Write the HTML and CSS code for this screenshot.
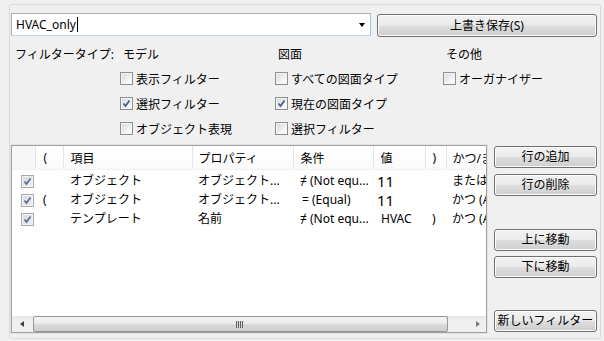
FILE: index.html
```html
<!DOCTYPE html>
<html lang="ja">
<head>
    <meta charset="UTF-8">
    <title>フィルター</title>
    <link rel="stylesheet" href="styles.css">
</head>
<body>
    <div class="group">
        <div class="top-row">
            <div class="combo">
                <span class="combo-text">HVAC_only</span><span class="caret"></span>
                <span class="combo-arrow"></span>
            </div>
            <button class="btn btn-save">上書き保存(S)</button>
        </div>

        <div class="filter-types">
            <div class="ft-label">フィルタータイプ:</div>
            <div class="ft-col ft-model">
                <div class="ft-head">モデル</div>
                <div class="chk"><span class="box"></span>表示フィルター</div>
                <div class="chk"><span class="box checked"><svg viewBox="0 0 11 11"><path d="M2.5 5.5 L4.5 8 L8.5 2.5" /></svg></span>選択フィルター</div>
                <div class="chk"><span class="box"></span>オブジェクト表現</div>
            </div>
            <div class="ft-col ft-sheet">
                <div class="ft-head">図面</div>
                <div class="chk"><span class="box"></span>すべての図面タイプ</div>
                <div class="chk"><span class="box checked"><svg viewBox="0 0 11 11"><path d="M2.5 5.5 L4.5 8 L8.5 2.5" /></svg></span>現在の図面タイプ</div>
                <div class="chk"><span class="box"></span>選択フィルター</div>
            </div>
            <div class="ft-col ft-other">
                <div class="ft-head">その他</div>
                <div class="chk"><span class="box"></span>オーガナイザー</div>
            </div>
        </div>

        <div class="rules">
            <div class="grid-box">
                <div class="grid-scroll">
                    <table class="grid">
                        <colgroup>
                            <col class="c-on"><col class="c-open"><col class="c-item"><col class="c-prop">
                            <col class="c-cond"><col class="c-val"><col class="c-close"><col class="c-join">
                        </colgroup>
                        <thead>
                            <tr>
                                <th></th>
                                <th class="p-open">(</th>
                                <th>項目</th>
                                <th class="p-prop">プロパティ</th>
                                <th>条件</th>
                                <th>値</th>
                                <th>)</th>
                                <th class="p-join">かつ/または</th>
                            </tr>
                        </thead>
                        <tbody>
                            <tr>
                                <td><span class="box dim checked"><svg viewBox="0 0 11 11"><path d="M2.5 5.5 L4.5 8 L8.5 2.5" /></svg></span></td>
                                <td class="p-open"></td>
                                <td>オブジェクト</td>
                                <td class="p-prop">オブジェクト...</td>
                                <td>≠ (Not equ...</td>
                                <td class="num">11</td>
                                <td></td>
                                <td class="p-join">または (OR)</td>
                            </tr>
                            <tr>
                                <td><span class="box dim checked"><svg viewBox="0 0 11 11"><path d="M2.5 5.5 L4.5 8 L8.5 2.5" /></svg></span></td>
                                <td class="p-open">(</td>
                                <td>オブジェクト</td>
                                <td class="p-prop">オブジェクト...</td>
                                <td class="p-eq">= (Equal)</td>
                                <td class="num">11</td>
                                <td></td>
                                <td class="p-join">かつ (AND)</td>
                            </tr>
                            <tr>
                                <td><span class="box dim checked"><svg viewBox="0 0 11 11"><path d="M2.5 5.5 L4.5 8 L8.5 2.5" /></svg></span></td>
                                <td class="p-open"></td>
                                <td>テンプレート</td>
                                <td class="p-prop">名前</td>
                                <td>≠ (Not equ...</td>
                                <td class="p-text">HVAC</td>
                                <td>)</td>
                                <td class="p-join">かつ (AND)</td>
                            </tr>
                        </tbody>
                    </table>
                </div>
                <div class="hscroll">
                    <span class="sb-arrow sb-left"></span>
                    <span class="sb-thumb"><span class="grip"></span></span>
                    <span class="sb-track"></span>
                    <span class="sb-arrow sb-right"></span>
                </div>
            </div>

            <div class="side-buttons">
                <button class="btn btn-add">行の追加</button>
                <button class="btn btn-del">行の削除</button>
                <button class="btn btn-up">上に移動</button>
                <button class="btn btn-down">下に移動</button>
                <button class="btn btn-new">新しいフィルター</button>
            </div>
        </div>
    </div>
</body>
</html>
```

FILE: styles.css
```css
body {
    margin: 0;
    background: #f0f0f0;
    font-family: "Noto Sans", "Noto Sans CJK JP", sans-serif;
    font-size: 12px;
    color: #000;
}
.group {
    box-sizing: border-box;
    width: 592px;
    height: 335px;
    margin: 4px 0 0 9px;
    padding: 8px 2px 0 1px;
    border: 1px solid #d9d9d9;
    border-radius: 3px;
}
.top-row {
    display: flex;
    gap: 6px;
}
.combo {
    box-sizing: border-box;
    position: relative;
    display: flex;
    align-items: center;
    width: 360px;
    height: 23px;
    padding-left: 4px;
    background: #fff;
    border: 1px solid #abadb3;
    border-right-color: #a3c6e8;
    border-bottom-color: #b9d3ec;
}
.combo-text {
    line-height: 16px;
}
.caret {
    display: inline-block;
    width: 1px;
    height: 15px;
    margin-left: 1px;
    background: #000;
}
.combo-arrow {
    position: absolute;
    right: 5px;
    top: 9px;
    width: 0;
    height: 0;
    border-left: 3.5px solid transparent;
    border-right: 3.5px solid transparent;
    border-top: 4px solid #000;
}
.btn {
    box-sizing: border-box;
    height: 22px;
    padding: 0;
    font-family: "Noto Sans", "Noto Sans CJK JP", sans-serif;
    font-size: 12px;
    line-height: 18px;
    color: #000;
    border: 1px solid #707070;
    border-radius: 3px;
    background: linear-gradient(#f2f2f2 0%, #ebebeb 48%, #dddddd 52%, #cfcfcf 100%);
    box-shadow: inset 0 0 0 1px #fcfcfc;
}
.btn-save {
    width: 220px;
    height: 23px;
    margin-top: 1px;
}
.filter-types {
    display: flex;
    margin-top: 10px;
    padding-left: 4px;
}
.ft-label {
    width: 105px;
    line-height: 16px;
}
.ft-model {
    width: 155px;
}
.ft-sheet {
    width: 168px;
}
.ft-head {
    line-height: 16px;
    padding-left: 3px;
    margin-bottom: 3px;
}
.chk {
    display: flex;
    align-items: center;
    gap: 3px;
    height: 25px;
    white-space: nowrap;
}
.box {
    box-sizing: border-box;
    display: inline-block;
    width: 13px;
    height: 13px;
    border: 1px solid #8e8f8f;
    background: linear-gradient(135deg, #d6d6d6, #f6f6f6 70%, #fff);
    box-shadow: inset 0 0 0 1px #f4f4f4;
}
.box svg {
    display: block;
    width: 11px;
    height: 11px;
}
.box path {
    fill: none;
    stroke: #4a5e9a;
    stroke-width: 1.8;
}
.box.dim {
    border-color: #a9a9a9;
    background: linear-gradient(135deg, #d9d9d9, #f0f0f0);
}
.box.dim path {
    stroke: #5b6f9f;
}
.rules {
    display: flex;
    gap: 7px;
    height: 188px;
    margin-top: 4px;
}
.grid-box {
    box-sizing: border-box;
    display: flex;
    flex-direction: column;
    width: 476px;
    height: 188px;
    background: #fff;
    border: 1px solid #a0a0a0;
    box-shadow: 0 0 0 1px #e3e3e3;
}
.grid-scroll {
    flex: 1;
    overflow: hidden;
}
.grid {
    table-layout: fixed;
    width: 514px;
    border-collapse: collapse;
}
.c-on { width: 23px; }
.c-open { width: 28px; }
.c-item { width: 129px; }
.c-prop { width: 101px; }
.c-cond { width: 80px; }
.c-val { width: 52px; }
.c-close { width: 21px; }
.c-join { width: 80px; }
.grid th {
    height: 23px;
    padding: 0 0 0 7px;
    font-weight: normal;
    text-align: left;
    white-space: nowrap;
    overflow: hidden;
    background: linear-gradient(#ffffff, #fafafa);
    border-right: 1px solid #e5e5e5;
    border-bottom: 1px solid #f2f2f2;
}
.grid th:first-child {
    background: #f7f7f7;
}
.grid tbody tr:first-child td {
    padding-top: 1px;
}
.grid td {
    height: 19px;
    padding: 0 0 0 7px;
    white-space: nowrap;
    overflow: hidden;
    line-height: 16px;
}
.grid td:first-child {
    padding-left: 9px;
}
.grid td:first-child .box {
    vertical-align: middle;
}
.grid .p-open { padding-left: 8px; }
.grid .p-prop { padding-left: 6px; }
.grid .p-join { padding-left: 6px; }
.grid .p-eq { padding-left: 9px; }
.grid .p-text { padding-left: 8px; }
.grid .num {
    padding-left: 4px;
    font-size: 15px;
}
.hscroll {
    display: flex;
    align-items: stretch;
    height: 16px;
    background: linear-gradient(#e6e6e6, #f0f0f0 30%, #f0f0f0);
}
.sb-arrow {
    position: relative;
    width: 20px;
}
.sb-arrow::after {
    content: "";
    position: absolute;
    top: 5px;
    width: 0;
    height: 0;
    border-top: 3.5px solid transparent;
    border-bottom: 3.5px solid transparent;
}
.sb-left::after {
    left: 8px;
    border-right: 4px solid #404040;
}
.sb-right {
    width: 17px;
}
.sb-right::after {
    left: 7px;
    border-left: 4px solid #7a7a7a;
}
.sb-thumb {
    box-sizing: border-box;
    position: relative;
    width: 415px;
    margin: 0 0 0 1px;
    border: 1px solid #979797;
    border-radius: 2px;
    background: linear-gradient(#f3f3f3, #e9e9e9 50%, #d8d8d8 55%, #cfcfcf);
}
.grip {
    position: absolute;
    left: 202px;
    top: 4px;
    width: 7px;
    height: 7px;
    background: repeating-linear-gradient(90deg, #5e5e5e 0 1px, #dcdcdc 1px 2px);
}
.sb-track {
    flex: 1;
}
.side-buttons {
    display: flex;
    flex-direction: column;
    width: 103px;
}
.btn-add { margin-top: 1px; }
.btn-del { margin-top: 6px; }
.btn-up { margin-top: 33px; }
.btn-down { margin-top: 5px; }
.btn-new {
    margin-top: auto;
    margin-bottom: 1px;
}
```
